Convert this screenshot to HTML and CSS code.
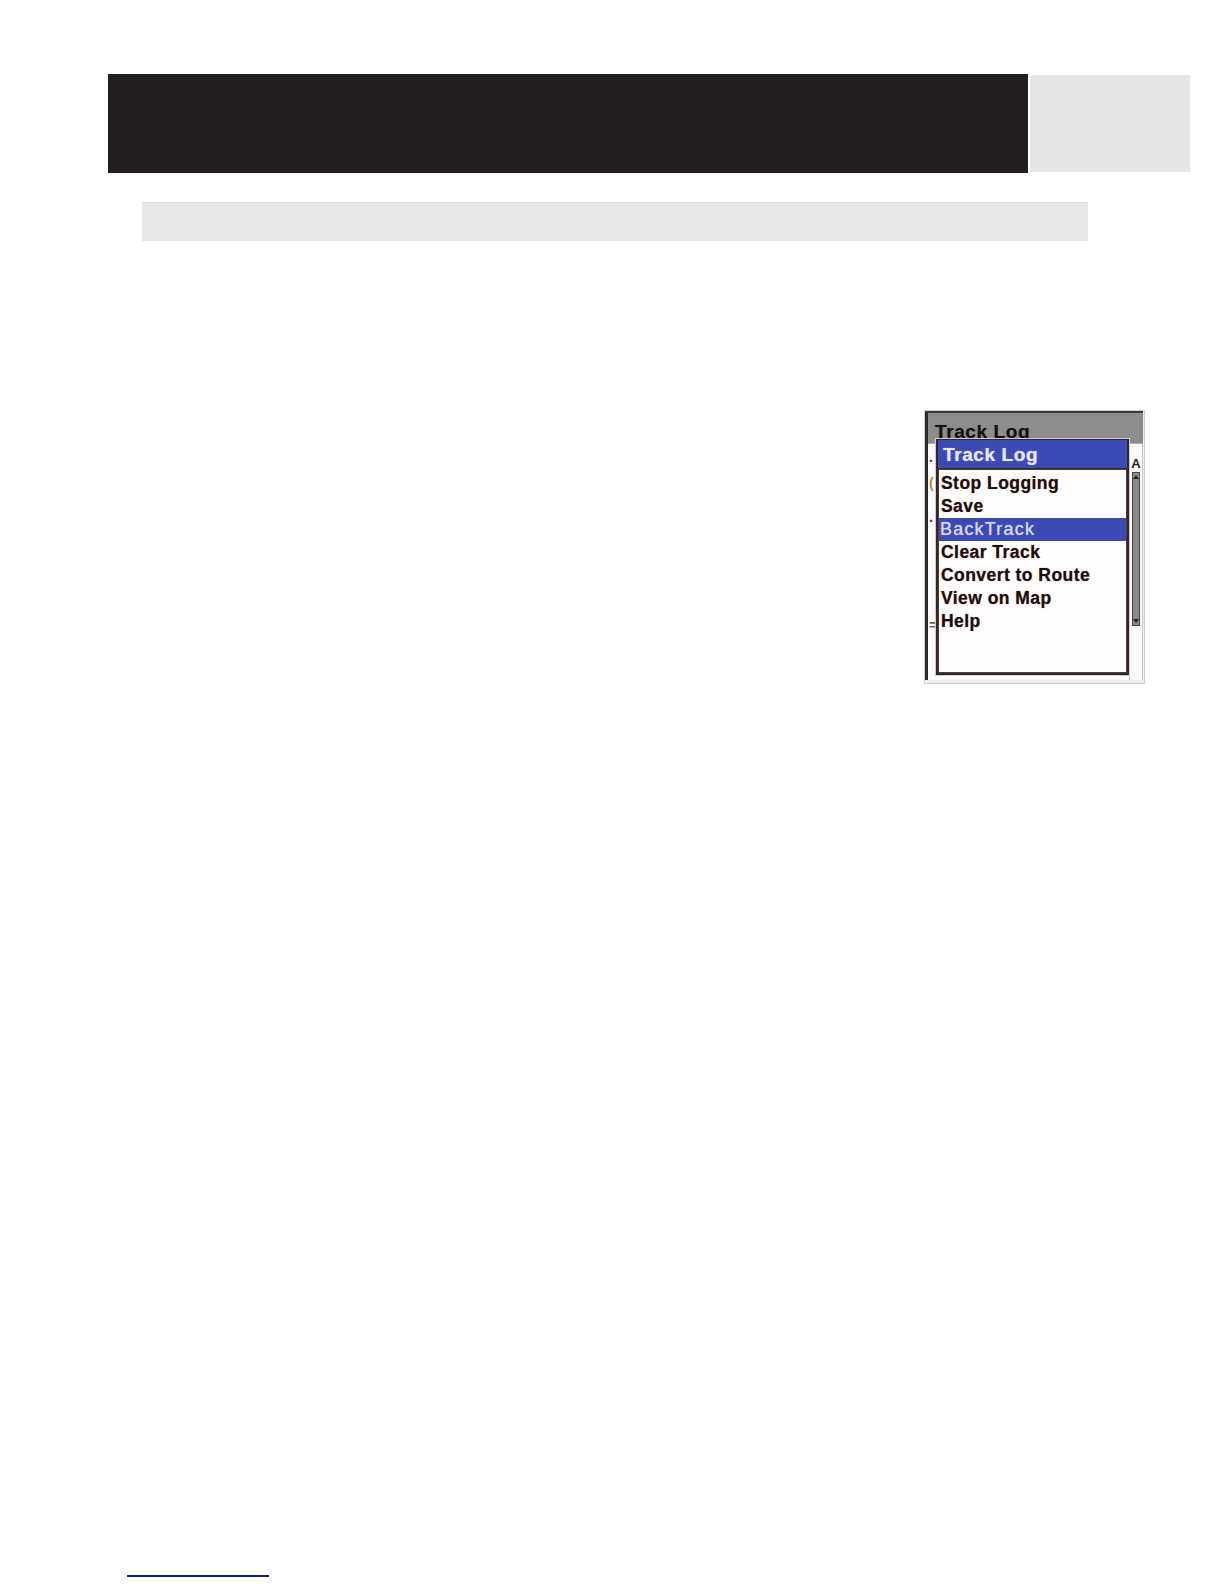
FILE: index.html
```html
<!DOCTYPE html>
<html>
<head>
<meta charset="utf-8">
<link rel="stylesheet" href="styles.css">
</head>
<body>
<div class="page">
  <div class="header">
    <div class="header-main"></div>
    <div class="header-tab"></div>
  </div>
  <div class="section-bar"></div>
  <div class="figure">
    <div class="device">
      <div class="screen">
        <div class="titlebar">Track Log</div>
        <div class="screen-body">
          <div class="edge-left">
            <span class="g1">.</span>
            <span class="g2">(</span>
            <span class="g3">.</span>
            <span class="g4">=</span>
          </div>
          <div class="edge-right">
            <span class="colA">A</span>
            <div class="scrollbar">
              <span class="arrow up"></span>
              <span class="arrow down"></span>
            </div>
          </div>
        </div>
      </div>
      <div class="popup">
        <div class="popup-title">Track Log</div>
        <ul class="menu">
          <li>Stop Logging</li>
          <li>Save</li>
          <li class="selected">BackTrack</li>
          <li>Clear Track</li>
          <li>Convert to Route</li>
          <li>View on Map</li>
          <li>Help</li>
        </ul>
      </div>
    </div>
  </div>
  <div class="footnote-rule"></div>
</div>
</body>
</html>
```

FILE: styles.css
```css
html, body {
  margin: 0;
  padding: 0;
  background: #ffffff;
}

.page {
  width: 1224px;
  height: 1584px;
  overflow: hidden;
  display: flex;
  flex-direction: column;
  font-family: "Liberation Sans", Arial, sans-serif;
}

.header {
  display: flex;
  gap: 2px;
  margin: 74px 0 0 108px;
}

.header-main {
  width: 920px;
  height: 99px;
  background: #231f20;
}

.header-tab {
  width: 160px;
  height: 97px;
  margin-top: 1px;
  background: #e6e6e6;
}

.section-bar {
  width: 946px;
  height: 39px;
  margin: 29px 0 0 142px;
  background: #e7e7e7;
  border-top: 1px solid #dcdcdc;
  box-sizing: border-box;
}

.figure {
  margin: 169px 0 0 924px;
}

.device {
  position: relative;
  width: 221px;
  height: 274px;
  box-sizing: border-box;
  border: 1px solid #cfcfcf;
  background: #eeeeee;
  padding: 0 1px 3px 0;
}

.screen {
  height: 100%;
  box-sizing: border-box;
  border-left: 3px solid #2b2b2b;
  border-top: 2px solid #3a3a3a;
  background: #fbfbfb;
  display: flex;
  flex-direction: column;
}

.titlebar {
  height: 30px;
  flex: none;
  background: #8d8d8d;
  color: #111;
  font-weight: 700;
  font-size: 19px;
  line-height: 37px;
  padding-left: 7px;
  overflow: hidden;
  letter-spacing: 0.6px;
  text-shadow: 0 0 1px #6b4a4a;
}

.screen-body {
  flex: 1;
  display: flex;
  justify-content: space-between;
  border-top: 1px solid #b0b0b0;
}

.edge-left {
  display: flex;
  flex-direction: column;
  width: 6px;
  padding-left: 1px;
  font-size: 14px;
  font-weight: 700;
  color: #333;
  line-height: 1;
}

.edge-left .g1 { margin-top: 6px; }
.edge-left .g2 { margin-top: 12px; color: #b08a3a; }
.edge-left .g3 { margin-top: 20px; }
.edge-left .g4 { margin-top: 94px; color: #666; }

.edge-right {
  display: flex;
  flex-direction: column;
  align-items: center;
  width: 12px;
  border-left: 1px solid #bcbcbc;
  border-right: 1px solid #c8c8c8;
}

.colA {
  font-size: 13px;
  font-weight: 700;
  color: #222;
  line-height: 1;
  margin-top: 13px;
  height: 14px;
}

.scrollbar {
  width: 6px;
  height: 152px;
  margin-top: 1px;
  background: #8a8a8a;
  border: 1px solid #444;
  display: flex;
  flex-direction: column;
  justify-content: space-between;
  align-items: center;
}

.arrow {
  width: 0;
  height: 0;
  border-left: 3px solid transparent;
  border-right: 3px solid transparent;
  margin: 2px 0;
}

.arrow.up { border-bottom: 4px solid #222; }
.arrow.down { border-top: 4px solid #222; }

.popup {
  position: absolute;
  left: 10px;
  top: 27px;
  width: 195px;
  height: 238px;
  box-sizing: border-box;
  background: #2a2a2a;
  border: 1px solid #dcc8c8;
  padding: 1px 2px 2px 2px;
  display: flex;
  flex-direction: column;
}

.popup-title {
  height: 28px;
  flex: none;
  background: #3b4bb3;
  color: #e9e6ff;
  font-weight: 700;
  font-size: 19px;
  line-height: 29px;
  padding-left: 5px;
  letter-spacing: 0.6px;
  text-shadow: 0 0 1px #c9c0ff;
  margin-bottom: 1px;
}

.menu {
  list-style: none;
  margin: 0;
  padding: 2px 0 0 0;
  flex: 1;
  background: #fffdfd;
  border: 1px solid #5a3a3a;
}

.menu li {
  height: 23px;
  line-height: 23px;
  font-size: 17.5px;
  font-weight: 700;
  letter-spacing: 0.45px;
  color: #1b1010;
  padding-left: 2px;
  white-space: nowrap;
  text-shadow: 0 0 1px #9b5d5d;
}

.menu li.selected {
  background: #3b4bb3;
  color: #ddd9ff;
  font-weight: 400;
  font-size: 18px;
  letter-spacing: 1.2px;
  padding-left: 1px;
  text-shadow: 0 0 1px #b8b0ff;
}

.footnote-rule {
  width: 142px;
  height: 2px;
  margin: 891px 0 0 127px;
  background: #1c1c8a;
}
```
